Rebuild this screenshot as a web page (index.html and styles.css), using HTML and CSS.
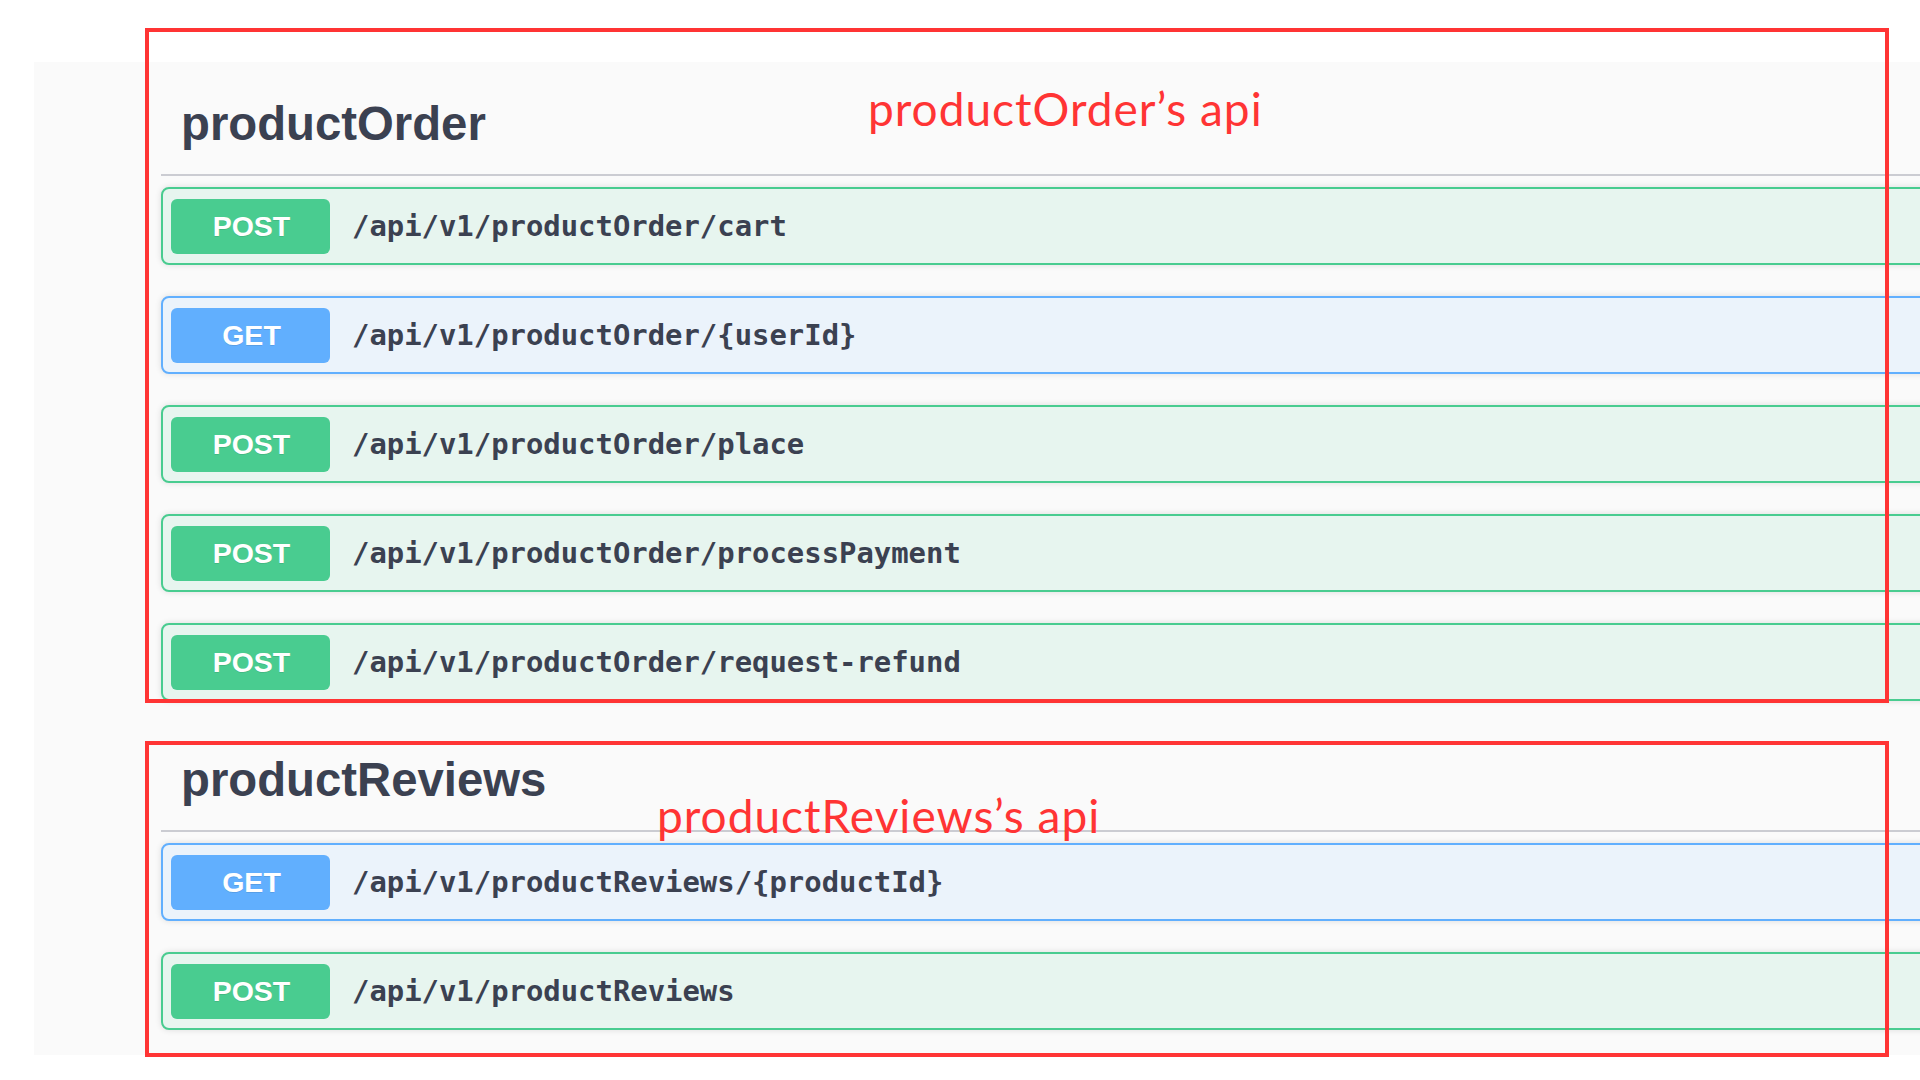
FILE: index.html
```html
<!DOCTYPE html>
<html lang="en">
<head>
<meta charset="utf-8">
<title>Swagger API sections</title>
<link rel="stylesheet" href="styles.css">
</head>
<body>
<div class="page">
  <div class="panel">
    <section class="tag-section">
      <h3 class="tag-title"><span>productOrder</span></h3>
      <div class="op op-post"><span class="method">POST</span><span class="path">/api/v1/productOrder/cart</span></div>
      <div class="op op-get"><span class="method">GET</span><span class="path">/api/v1/productOrder/{userId}</span></div>
      <div class="op op-post"><span class="method">POST</span><span class="path">/api/v1/productOrder/place</span></div>
      <div class="op op-post"><span class="method">POST</span><span class="path">/api/v1/productOrder/processPayment</span></div>
      <div class="op op-post"><span class="method">POST</span><span class="path">/api/v1/productOrder/request-refund</span></div>
    </section>
    <section class="tag-section">
      <h3 class="tag-title"><span>productReviews</span></h3>
      <div class="op op-get"><span class="method">GET</span><span class="path">/api/v1/productReviews/{productId}</span></div>
      <div class="op op-post"><span class="method">POST</span><span class="path">/api/v1/productReviews</span></div>
    </section>
  </div>
  <div class="mark mark-one"></div>
  <div class="mark mark-two"></div>
  <div class="note note-one">productOrder’s api</div>
  <div class="note note-two">productReviews’s api</div>
</div>
</body>
</html>
```
FILE: styles.css
```css
html, body {
  margin: 0;
  padding: 0;
  background: #ffffff;
  overflow: hidden;
}
.page {
  position: relative;
  width: 1920px;
  height: 1080px;
  padding: 62px 0 0 34px;
  box-sizing: border-box;
}
.panel {
  background: #fafafa;
  height: 993px;
  padding: 14px 0 0 127px;
  box-sizing: border-box;
  overflow: hidden;
}
.tag-title {
  margin: 0 0 11px 0;
  height: 100px;
  box-sizing: border-box;
  padding: 21px 0 0 20px;
  border-bottom: 2px solid #cbccd2;
  font-family: "Liberation Sans", Arial, sans-serif;
  font-weight: 700;
  font-size: 47.3px;
  line-height: 54px;
  color: #3b4151;
}
.op {
  display: flex;
  align-items: center;
  height: 78px;
  box-sizing: border-box;
  margin: 0 -30px 31px 0;
  padding: 0 0 0 8px;
  border: 2px solid #49cc90;
  border-radius: 8px;
  background: #e7f5ef;
  box-shadow: 0 0 6px rgba(0, 0, 0, 0.12);
}
.op-get {
  border-color: #61affe;
  background: #ebf3fb;
}
.method {
  display: flex;
  align-items: center;
  justify-content: center;
  width: 159px;
  height: 55px;
  border-radius: 6px;
  background: #49cc90;
  color: #ffffff;
  font-family: "Liberation Sans", Arial, sans-serif;
  font-weight: 700;
  font-size: 28.5px;
  padding-left: 2px;
  box-sizing: border-box;
  text-shadow: 0 1px 0 rgba(0, 0, 0, 0.1);
}
.op-get .method {
  background: #61affe;
}
.path {
  margin-left: 22px;
  font-family: "DejaVu Sans Mono", "Liberation Mono", monospace;
  font-weight: 700;
  font-size: 28.9px;
  color: #3b4151;
}
.mark {
  position: absolute;
  left: 145px;
  width: 1744px;
  border: 4px solid #ff3434;
  box-sizing: border-box;
}
.mark-one {
  top: 28px;
  height: 675px;
}
.mark-two {
  top: 741px;
  height: 316px;
}
.note {
  position: absolute;
  font-family: "Lato", "Open Sans", sans-serif;
  font-weight: 400;
  font-size: 46px;
  letter-spacing: 1px;
  line-height: 1;
  color: #ff3434;
  white-space: nowrap;
}
.note-one {
  left: 868px;
  top: 86px;
}
.note-two {
  left: 657px;
  top: 793px;
}
```
